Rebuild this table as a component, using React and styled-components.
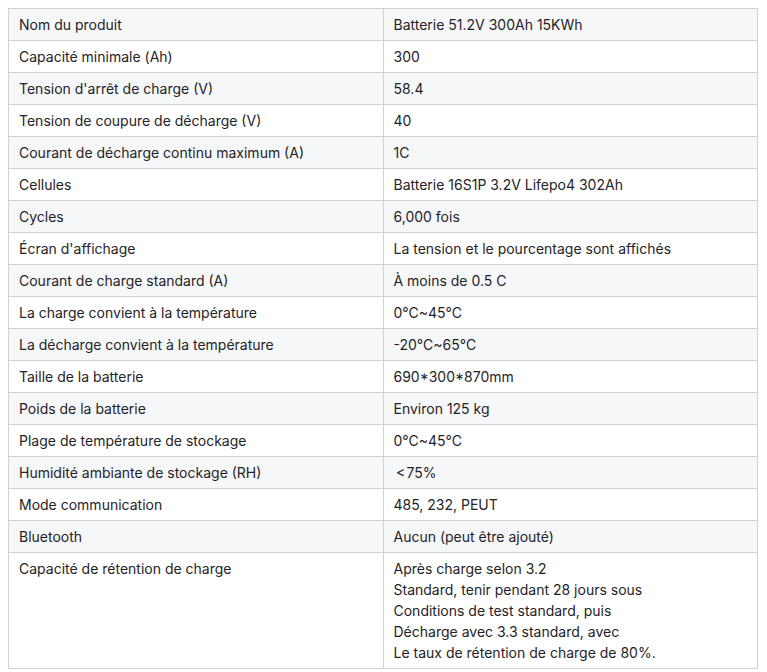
import React from "react";
import styled, { createGlobalStyle } from "styled-components";

const Global = createGlobalStyle`
  body {
    margin: 8px;
    background: #ffffff;
    font-family: Inter, "Noto Sans", "Noto Sans CJK SC", sans-serif;
  }
`;

const Table = styled.table`
  width: 750px;
  border-collapse: collapse;
  table-layout: fixed;
  font-family: Inter, "Noto Sans CJK SC", sans-serif;
  font-size: 14px;
  line-height: 21px;
  color: #1f2328;
`;

const Row = styled.tr`
  background: ${(p) => (p.$striped ? "#f6f7f9" : "#ffffff")};
`;

const Cell = styled.td`
  border: 1px solid #d1d1d1;
  padding: 5px 10px;
  vertical-align: top;
  width: 50%;
`;

const Line = styled.div``;

const rows = [
  ["Nom du produit", "Batterie 51.2V 300Ah 15KWh"],
  ["Capacité minimale (Ah)", "300"],
  ["Tension d'arrêt de charge (V)", "58.4"],
  ["Tension de coupure de décharge (V)", "40"],
  ["Courant de décharge continu maximum (A)", "1C"],
  ["Cellules", "Batterie 16S1P 3.2V Lifepo4 302Ah"],
  ["Cycles", "6,000 fois"],
  ["Écran d'affichage", "La tension et le pourcentage sont affichés"],
  ["Courant de charge standard (A)", "À moins de 0.5 C"],
  ["La charge convient à la température", "0°C~45°C"],
  ["La décharge convient à la température", "-20°C~65°C"],
  ["Taille de la batterie", "690*300*870mm"],
  ["Poids de la batterie", "Environ 125 kg"],
  ["Plage de température de stockage", "0°C~45°C"],
  ["Humidité ambiante de stockage (RH)", "\u2009<\u200A75%"],
  ["Mode communication", "485, 232, PEUT"],
  ["Bluetooth", "Aucun (peut être ajouté)"],
  [
    "Capacité de rétention de charge",
    [
      "Après charge selon 3.2",
      "Standard, tenir pendant 28 jours sous",
      "Conditions de test standard, puis",
      "Décharge avec 3.3 standard, avec",
      "Le taux de rétention de charge de 80%.",
    ],
  ],
];

export default function App() {
  return (
    <>
      <Global />
      <Table>
        <tbody>
          {rows.map(([k, v], i) => (
            <Row key={i} $striped={i % 2 === 0}>
              <Cell>{k}</Cell>
              <Cell>
                {Array.isArray(v) ? v.map((l, j) => <Line key={j}>{l}</Line>) : v}
              </Cell>
            </Row>
          ))}
        </tbody>
      </Table>
    </>
  );
}
